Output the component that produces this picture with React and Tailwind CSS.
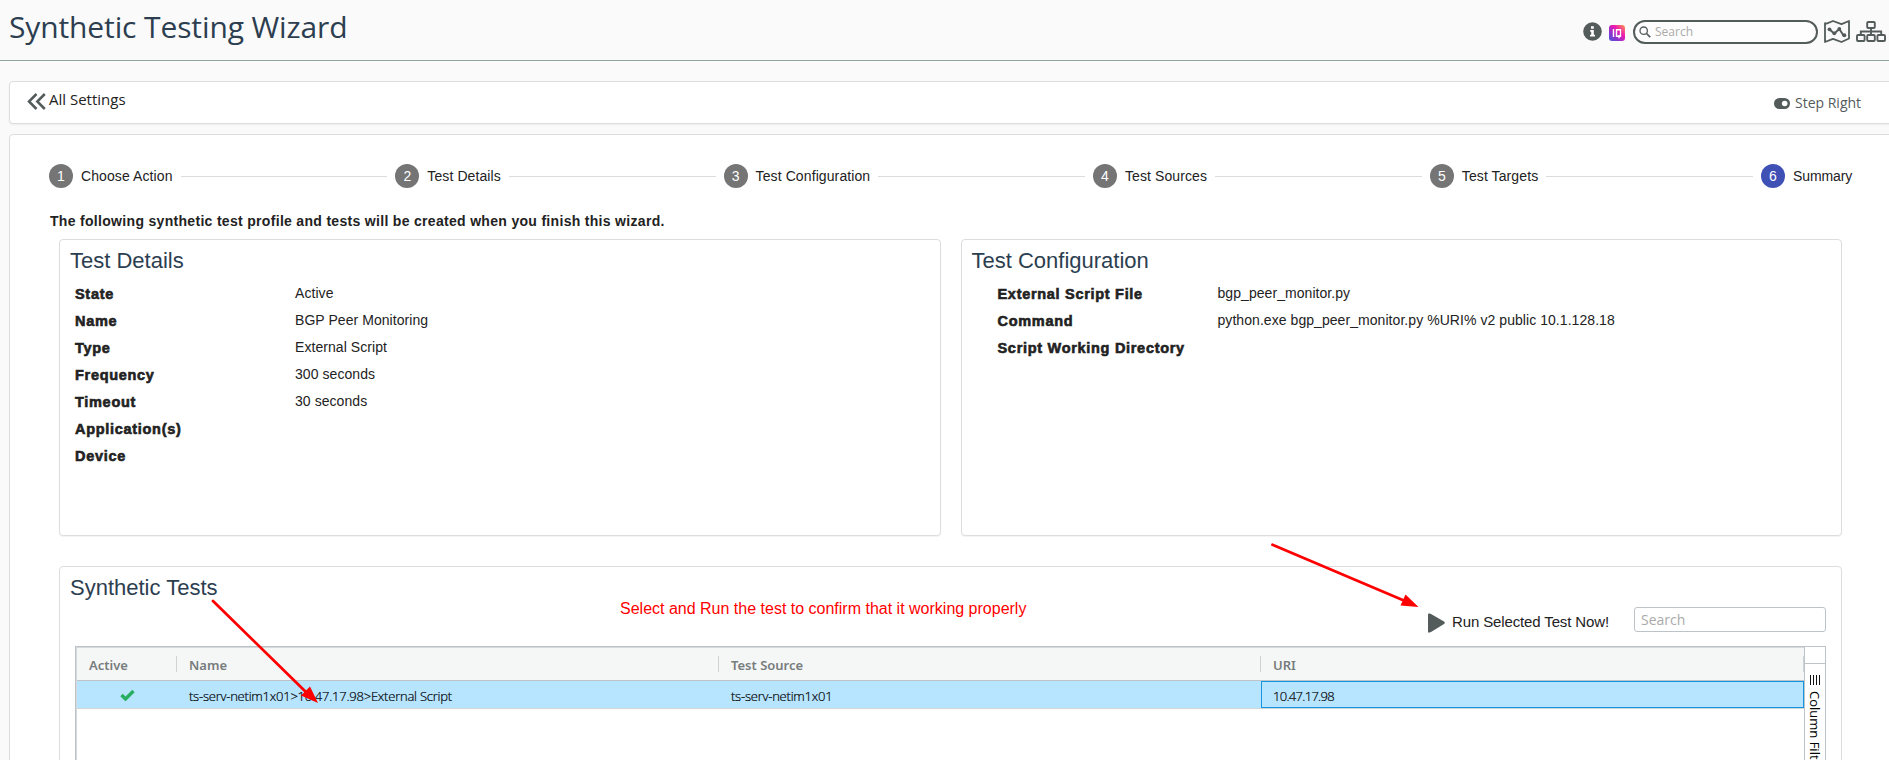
const STEPS = ['Choose Action', 'Test Details', 'Test Configuration', 'Test Sources', 'Test Targets', 'Summary'];

const DETAILS = [
  ['State', 'Active'],
  ['Name', 'BGP Peer Monitoring'],
  ['Type', 'External Script'],
  ['Frequency', '300 seconds'],
  ['Timeout', '30 seconds'],
  ['Application(s)', ''],
  ['Device', ''],
];

const CONFIG = [
  ['External Script File', 'bgp_peer_monitor.py'],
  ['Command', 'python.exe bgp_peer_monitor.py %URI% v2 public 10.1.128.18'],
  ['Script Working Directory', ''],
];

function InfoIcon() {
  return (
    <svg width="19" height="19" viewBox="0 0 19 19" className="shrink-0">
      <circle cx="9.5" cy="9.5" r="9.3" fill="#535c5b" />
      <path d="M8 4.200h2.800v2.500H8zM7.200 8h3.600v4.700h1.200v1.700H7v-1.700h1.200V9.700h-1z" fill="#fff" />
    </svg>
  );
}

function IqIcon() {
  return (
    <svg width="16" height="16" viewBox="0 0 16 16" className="shrink-0">
      <defs>
        <linearGradient id="iq" x1="0" y1="1" x2="1" y2="0">
          <stop offset="0" stopColor="#4a55d8" />
          <stop offset="0.3" stopColor="#8a35d0" />
          <stop offset="0.62" stopColor="#ee18b0" />
          <stop offset="1" stopColor="#ff9a4a" />
        </linearGradient>
      </defs>
      <rect width="16" height="16" rx="3" fill="url(#iq)" />
      <path d="M4.500 4v8M7.500 4.700h4v6.600h-4zM10 10v3.200" fill="none" stroke="#fff" strokeWidth="1.400" />
    </svg>
  );
}

function MapIcon() {
  return (
    <svg width="26" height="23" viewBox="0 0 26 23" className="shrink-0" fill="none" stroke="#535c5b" strokeWidth="1.800" strokeLinejoin="round">
      <path d="M1 3.200 2.500 3.600 9 1l8.500 3.200L25 1v17.500L17.500 22 9 18.800 1 22V3.200z" />
      <path d="M5.500 9.500l4.800 4 5-4.500 4.600 7" strokeWidth="2" />
      <g fill="#535c5b" stroke="none">
        <circle cx="5.500" cy="9.300" r="1.900" />
        <circle cx="10.300" cy="13.300" r="1.900" />
        <circle cx="15.300" cy="9" r="1.900" />
        <circle cx="20.300" cy="15.300" r="2" />
      </g>
    </svg>
  );
}

function TreeIcon() {
  return (
    <svg width="30" height="21" viewBox="0 0 30 21" className="shrink-0" fill="none" stroke="#535c5b" strokeWidth="1.900">
      <rect x="11.200" y="1" width="7.600" height="6" rx="1" />
      <rect x="1" y="14" width="7.600" height="6" rx="1" />
      <rect x="11.200" y="14" width="7.600" height="6" rx="1" />
      <rect x="21.400" y="14" width="7.600" height="6" rx="1" />
      <path d="M15 7v7M4.800 14v-3.500h20.400V14" />
    </svg>
  );
}

function Panel({ title, rows, indent }) {
  return (
    <section className="h-[297px] flex-1 rounded-[4px] border border-[#dcdddd] bg-white pt-2 pl-2.5 shadow-[0_1px_1px_rgba(0,0,0,0.05)]">
      <h2 className="text-[22px] leading-[26px] text-[#2c3e50]">{title}</h2>
      <dl className={indent}>
        {rows.map(([label, value]) => (
          <div key={label} className="flex h-[27px] items-start">
            <dt className="w-[220px] pt-[6px] text-[14.5px] leading-[16px] font-bold tracking-[0.7px] [-webkit-text-stroke:0.6px_#222]">
              {label}
            </dt>
            <dd className="pt-[5px] text-[14px] leading-[16px] tracking-[0.06px]">{value}</dd>
          </div>
        ))}
      </dl>
    </section>
  );
}

function HeadCell({ children, className }) {
  return (
    <div className={`flex items-center ${className}`}>
      <span className="flex-1 pt-[3px]">{children}</span>
      <span className="h-4 w-px bg-[#cfd3d5]" />
    </div>
  );
}

export default function App() {
  return (
    <div className="relative h-[760px] w-[1889px] overflow-hidden bg-[#fafafa] font-['Liberation_Sans',Arial,sans-serif] text-[#222]">
      <header className="flex h-[61px] justify-between border-b border-[#8fa3a0] pr-[3px] pl-[9px]">
        <h1 className="pt-[7px] font-['Open_Sans',sans-serif] text-[30px] leading-[40px] tracking-[-0.12px] text-[#2c3e50]">
          Synthetic Testing Wizard
        </h1>
        <div className="flex h-[43px] items-center pt-[20px]">
          <InfoIcon />
          <span className="ml-[7px] pt-[2px]"><IqIcon /></span>
          <div className="ml-2 flex h-6 w-[185px] shrink-0 items-center rounded-full border-2 border-[#535c5b] bg-[#fdfdfd] pl-1">
            <svg width="12" height="12" viewBox="0 0 12 12" fill="none" stroke="#535c5b">
              <circle cx="4.700" cy="4.700" r="3.700" strokeWidth="1.300" />
              <path d="M7.500 7.500l3.700 3.700" strokeWidth="1.700" />
            </svg>
            <span className="ml-1 pt-px font-['Open_Sans',sans-serif] text-[12px] leading-4 text-[#aaa]">Search</span>
          </div>
          <span className="ml-[6px]"><MapIcon /></span>
          <span className="ml-[6px]"><TreeIcon /></span>
        </div>
      </header>

      <nav className="mt-5 ml-[9px] flex h-[43px] w-[1900px] items-start rounded-[4px] border border-[#dcdddd] bg-white pl-[17px] shadow-[0_1px_2px_rgba(0,0,0,0.06)]">
        <svg width="19" height="17" viewBox="0 0 19 17" className="mt-[11px]" fill="none" stroke="#535c5b" strokeWidth="2.500">
          <path d="M9.500 1 2 8.500l7.500 7.500M17.800 1l-7.500 7.500 7.500 7.500" />
        </svg>
        <span className="ml-[3px] pt-[7px] font-['Open_Sans',sans-serif] text-[15px] leading-5">All Settings</span>
        <span className="ml-auto flex w-[134px] items-center gap-[5px] pt-[11px]">
          <svg width="16" height="11" viewBox="0 0 16 11">
            <rect width="16" height="11" rx="5.500" fill="#535c5b" />
            <circle cx="10.700" cy="5.500" r="2.800" fill="#fff" />
          </svg>
          <span className="font-['Open_Sans',sans-serif] text-[14px] leading-5 text-[#535c5b]">Step Right</span>
        </span>
      </nav>

      <main className="mt-[10px] ml-[9px] h-[700px] w-[1900px] rounded-[4px] border border-[#dcdddd] bg-white">
        <ol className="mt-[29px] ml-[39px] flex w-[1804px] items-center">
          {STEPS.map((step, i) => (
            <li key={step} className={i < 5 ? 'flex flex-auto items-center' : 'flex w-[92px] items-center'}>
              <span
                className={`flex size-6 shrink-0 items-center justify-center rounded-full text-[14px] leading-6 text-white ${
                  i === 5 ? 'bg-[#3f51b5]' : 'bg-[#757575]'
                }`}
              >
                {i + 1}
              </span>
              <span
                className={`ml-2 text-[14px] leading-6 whitespace-nowrap ${i === 5 ? 'tracking-[-0.1px]' : 'tracking-[0.1px]'}`}
              >
                {step}
              </span>
              {i < 5 && <span className="mx-2 h-px flex-1 bg-[#dcdcdc]" />}
            </li>
          ))}
        </ol>

        <p className="mt-[25px] ml-[40px] text-[14px] leading-4 font-bold tracking-[0.31px]">
          The following synthetic test profile and tests will be created when you finish this wizard.
        </p>

        <div className="mt-[10px] ml-[49px] flex w-[1783px] gap-5">
          <Panel title="Test Details" rows={DETAILS} indent="mt-[6px] pl-[5px]" />
          <Panel title="Test Configuration" rows={CONFIG} indent="mt-[6px] pl-[26px]" />
        </div>

        <section className="mt-[30px] ml-[49px] h-[300px] w-[1783px] rounded-[4px] border border-[#dcdddd] bg-white">
          <div className="flex h-[79px] items-start pl-2.5">
            <h2 className="w-[550px] pt-2 text-[22px] leading-[26px] text-[#2c3e50]">Synthetic Tests</h2>
            <p className="pt-[32px] text-[16px] leading-[19px] text-[#f00]">
              Select and Run the test to confirm that it working properly
            </p>
            <div className="mr-[15px] ml-auto flex items-start pt-[40px]">
              <svg width="17" height="20" viewBox="0 0 17 20" className="mt-[6px]">
                <path d="M0 1.500Q0 0 1.500.500L3 .900 16 8.500Q17.500 9.700 16 11L3 19 1.500 19.500Q0 20 0 18.500z" fill="#535c5b" />
              </svg>
              <span className="mt-[5px] ml-[7px] w-[182px] text-[15px] leading-5 tracking-[-0.13px]">Run Selected Test Now!</span>
              <div className="h-[25px] w-[192px] rounded-[3px] border border-[#bdc3c7] pl-[6px] font-['Open_Sans',sans-serif] text-[14px] leading-[23px] text-[#aaa]">
                Search
              </div>
            </div>
          </div>

          <div className="ml-[15px] flex h-[221px] w-[1751px] border border-b-0 border-[#bdc3c7]">
            <div className="w-[1728px] border-t border-l border-[#d5d9db]">
              <div className="flex h-[33px] border-b border-[#bdc3c7] bg-[#f5f7f7] font-['Noto_Sans',sans-serif] text-[13px] font-semibold text-[#777c7c]">
                <HeadCell className="w-[100px] pl-3">Active</HeadCell>
                <HeadCell className="w-[542px] pl-3">Name</HeadCell>
                <HeadCell className="w-[542px] pl-3">Test Source</HeadCell>
                <HeadCell className="flex-1 pl-3">URI</HeadCell>
              </div>
              <div className="flex h-[28px] items-stretch border-b border-[#d0d5d8] bg-[#b7e4ff] font-['Open_Sans',sans-serif] text-[13px] leading-[30px] font-light tracking-[-0.23px] text-black [-webkit-text-stroke:0.2px_black]">
                <div className="flex w-[112px] items-center pl-[43px]">
                  <svg width="15" height="12" viewBox="0 0 15 12">
                    <path d="M1.500 6l4 4L13.500 2" fill="none" stroke="#27ae60" strokeWidth="3.400" />
                  </svg>
                </div>
                <div className="w-[542px]">ts-serv-netim1x01&gt;10.47.17.98&gt;External Script</div>
                <div className="w-[530px]">ts-serv-netim1x01</div>
                <div className="flex-1 border border-[#1495e0] pl-[11px] leading-[28px] tracking-[-0.7px]">10.47.17.98</div>
              </div>
            </div>
            <div className="w-[21px] border-l border-[#bdc3c7]">
              <div className="h-[17px] border-b border-[#bdc3c7]" />
              <div className="flex flex-col items-center pt-[11px]">
                <svg width="10" height="10" viewBox="0 0 10 10" stroke="#111" strokeWidth="1">
                  <path d="M.5 0v10M3.500 0v10M6.500 0v10M9.500 0v10" />
                </svg>
                <span className="mt-[6px] font-['Open_Sans',sans-serif] text-[13px] leading-[18px] whitespace-nowrap text-black [writing-mode:vertical-rl]">
                  Column Filters
                </span>
              </div>
            </div>
          </div>
        </section>
      </main>

      <svg width="1889" height="760" viewBox="0 0 1889 760" className="pointer-events-none absolute top-0 left-0" stroke="#f00" fill="#f00">
        <path d="M213 601L309 695M1272.500 544.800L1405 601" strokeWidth="2.800" strokeLinecap="round" />
        <path d="M318 703l-8-16.500-9 9zM1418.500 607l-13-12.500-5 11z" stroke="none" />
      </svg>
    </div>
  );
}
